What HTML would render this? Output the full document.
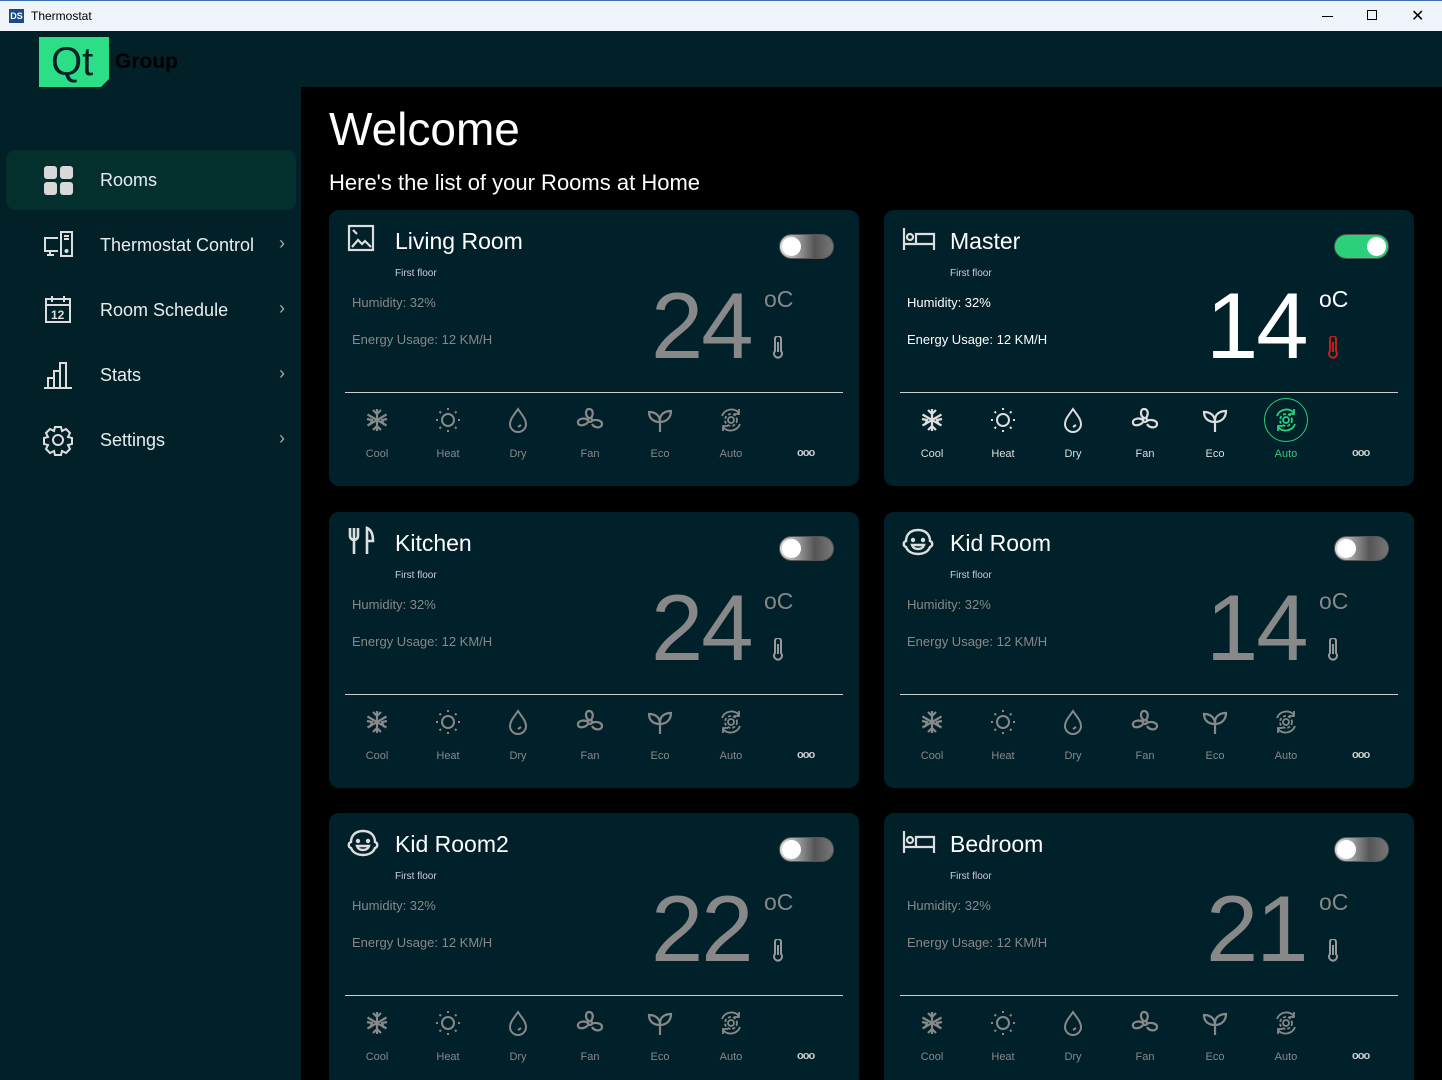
<!DOCTYPE html>
<html style="overflow:hidden"><head><meta charset="utf-8"><style>
*{margin:0;padding:0;box-sizing:border-box}
html,body{width:1442px;height:1080px;overflow:hidden}
body{background:#000;font-family:"Liberation Sans",sans-serif;position:relative}
.tb{position:absolute;left:0;top:0;width:1442px;height:31px;background:#eff3fa;border-top:1px solid #3b6fb5}
.tb .t{position:absolute;left:31px;top:8px;font-size:12px;color:#000}
.ds{position:absolute;left:9px;top:8px;width:15px;height:14px;background:#1b4a86;color:#fff;font-size:9px;font-weight:bold;text-align:center;line-height:14px}
.side{position:absolute;left:0;top:31px;width:301px;height:1049px;background:#012027}
.hdr{position:absolute;left:301px;top:31px;width:1141px;height:56px;background:#012027}
.qt{position:absolute;left:39px;top:37px;width:70px;height:50px;background:#2cde85;clip-path:polygon(5px 0,100% 0,100% 42px,62px 100%,0 100%,0 0);color:#012027;font-size:40px;line-height:50px;padding-left:12px}
.grp{position:absolute;left:115px;top:50px;font-size:21px;font-weight:bold;color:#000}
.nav{position:absolute;left:6px;width:290px;height:60px;border-radius:10px;color:#e8eef0;font-size:18px}
.nav.a{background:#03302c}
.nav span{position:absolute;left:94px;top:20px}
.nav svg{position:absolute;left:36px;top:14px}
.nav .ch{position:absolute;left:273px;top:18px;color:#aaa;font-size:18px}
h1{position:absolute;left:329px;top:102px;font-size:46px;font-weight:normal;color:#fff}
.sub{position:absolute;left:329px;top:170px;font-size:22px;color:#fff}
.card{position:absolute;width:530px;height:276px;background:#00202a;border-radius:10px;overflow:hidden}
.card .ic{position:absolute;left:18px;top:14px}
.card .nm{position:absolute;left:66px;top:18px;font-size:23px;color:#fff}
.card .ff{position:absolute;left:66px;top:58px;font-size:10px;color:#ccd}
.card .hu{position:absolute;left:23px;top:85px;font-size:13px;color:#888}
.card .en{position:absolute;left:23px;top:122px;font-size:13px;color:#888}
.card .tp{position:absolute;left:322px;top:62px;font-size:94px;color:#888;letter-spacing:-2px}
.card .oc{position:absolute;left:435px;top:76px;font-size:23px;color:#888}
.card .th{position:absolute;left:441px;top:126px;color:#999}
.card .ln{position:absolute;left:16px;top:182px;width:498px;height:1px;background:#ccc}
.card .tg{position:absolute;left:450px;top:24px;width:55px;height:25px;border-radius:13px;background:linear-gradient(90deg,#ddd 0,#999 35%,#555 65%,#777);border:1px solid #555}
.card .tg::after{content:"";position:absolute;left:2px;top:2px;width:19px;height:19px;border-radius:50%;background:#fff}
.card.on .tg{background:#2ccf7a}
.card.on .tg::after{left:32px}
.card.on .hu,.card.on .en,.card.on .tp,.card.on .oc{color:#fff}
.md{position:absolute;top:196px;width:60px;text-align:center;font-size:11px;color:#888}
.md svg{display:block;margin:0 auto 14px}
.dots{position:absolute;left:468px;top:237px;font-size:11px;color:#ccc;letter-spacing:-1px;font-weight:bold}
.on .md{color:#ddd}
.on .md.au{color:#2ccf7a}
.ring{position:absolute;left:8px;top:-8px;width:44px;height:44px;border:1.5px solid #2ccf7a;border-radius:50%}
</style></head><body>
<svg width="0" height="0" style="position:absolute">
<defs>
<g id="cool" fill="none" stroke="currentColor" stroke-width="2.2"><path d="M14 3v22M4.5 8.5l19 11M4.5 19.5l19-11M10 4l4 4 4-4M10 24l4-4 4 4M4 13l5 1-2 5M24 13l-5 1 2 5"/></g>
<g id="heat" fill="none" stroke="currentColor" stroke-width="2"><circle cx="14" cy="14" r="6"/><path d="M14 2v2M14 24v2M2 14h2M24 14h2M5.5 5.5l1.5 1.5M21 21l1.5 1.5M5.5 22.5L7 21M21 7l1.5-1.5"/></g>
<g id="dry" fill="none" stroke="currentColor" stroke-width="2"><path d="M14 3C10 9 6 13 6 18a8 8 0 0016 0c0-5-4-9-8-15z"/><path d="M17 19l-3 2"/></g>
<g id="fan" fill="none" stroke="currentColor" stroke-width="2.2"><circle cx="14" cy="14" r="2"/><path d="M13 12C9 10 9 3 13 3s5 5 2 9M16 15c3-2 10-1 10 3s-7 5-10 0M12 16c-2 3-9 5-10 1s6-6 10-3"/></g>
<g id="eco" fill="none" stroke="currentColor" stroke-width="2.2"><path d="M14 26V14M14 16C8 16 3 13 3 6c6 0 11 3 11 10M14 14c0-6 5-9 11-9 0 7-5 11-11 11"/></g>
<g id="auto" fill="none" stroke="currentColor" stroke-width="1.8"><circle cx="14" cy="14" r="3"/><circle cx="14" cy="14" r="6" stroke-dasharray="3 2"/><path d="M5 10A10 10 0 0122 7M23 18A10 10 0 016 21M22 3v5h-5M6 25v-5h5"/></g>
<g id="thm" fill="none" stroke="currentColor" stroke-width="2"><path d="M5 3a3 3 0 016 0v12a4 4 0 11-6 0z"/><path d="M8 6v10"/></g>
<g id="modes">
</g>
</defs></svg>

<div class="tb"><div class="ds">DS</div><div class="t">Thermostat</div>
<div style="position:absolute;left:1322px;top:15px;width:11px;height:1px;background:#000"></div>
<div style="position:absolute;left:1367px;top:9px;width:10px;height:10px;border:1px solid #000"></div>
<div style="position:absolute;left:1411px;top:5px;font-size:16px;color:#000">✕</div></div>
<div class="side"></div><div class="hdr"></div>
<div class="qt">Qt</div><div class="grp">Group</div>

<div class="nav a" style="top:150px"><svg width="32" height="32"><g fill="#d8d8d8"><rect x="2" y="2" width="13" height="13" rx="3"/><rect x="18" y="2" width="13" height="13" rx="3"/><rect x="2" y="18" width="13" height="13" rx="3"/><rect x="18" y="18" width="13" height="13" rx="3"/></g></svg><span>Rooms</span></div>
<div class="nav" style="top:215px"><svg width="32" height="32" fill="none" stroke="#ddd" stroke-width="2"><path d="M16 9H3v13h13M8 22v4M5 26h7"/><rect x="19" y="3" width="11" height="24"/><path d="M22 7h5M22 10h5"/><circle cx="24.5" cy="22" r="1" fill="#ddd"/></svg><span>Thermostat Control</span><div class="ch">›</div></div>
<div class="nav" style="top:280px"><svg width="32" height="32" fill="none" stroke="#ddd" stroke-width="2"><rect x="4" y="5" width="24" height="23"/><path d="M4 11h24M10 2v6M22 2v6"/><text x="9" y="25" font-size="12" fill="#ddd" stroke="none" font-family="Liberation Sans" font-weight="bold">12</text></svg><span>Room Schedule</span><div class="ch">›</div></div>
<div class="nav" style="top:345px"><svg width="32" height="32" fill="none" stroke="#ddd" stroke-width="2"><path d="M2 29h28M6 29V19h6v10M12 29V12h6v17M18 29V4h6v25"/></svg><span>Stats</span><div class="ch">›</div></div>
<div class="nav" style="top:410px"><svg width="32" height="32" fill="none" stroke="#ddd" stroke-width="2"><circle cx="16" cy="16" r="5"/><path d="M13 3h6l1 4 4-2 4 4-2 4 4 1v6l-4 1 2 4-4 4-4-2-1 4h-6l-1-4-4 2-4-4 2-4-4-1v-6l4-1-2-4 4-4 4 2z"/></svg><span>Settings</span><div class="ch">›</div></div>

<h1>Welcome</h1>
<div class="sub">Here's the list of your Rooms at Home</div>

<div class="card" style="left:329px;top:210px">
<svg class="ic" width="30" height="30" fill="none" stroke="#ddd" stroke-width="2.2"><rect x="2" y="2" width="24" height="24"/><path d="M5 23l6-7 4 4 3-3 6 6M6 6l4 4"/></svg>
<div class="nm">Living Room</div><div class="tg"></div><div class="ff">First floor</div>
<div class="hu">Humidity: 32%</div><div class="en">Energy Usage: 12 KM/H</div>
<div class="tp">24</div><div class="oc">oC</div><svg class="th" width="16" height="24"><use href="#thm"/></svg><div class="ln"></div>
<div class="md" style="left:18px"><svg width="28" height="28"><use href="#cool"/></svg>Cool</div>
<div class="md" style="left:89px"><svg width="28" height="28"><use href="#heat"/></svg>Heat</div>
<div class="md" style="left:159px"><svg width="28" height="28"><use href="#dry"/></svg>Dry</div>
<div class="md" style="left:231px"><svg width="28" height="28"><use href="#fan"/></svg>Fan</div>
<div class="md" style="left:301px"><svg width="28" height="28"><use href="#eco"/></svg>Eco</div>
<div class="md" style="left:372px"><svg width="28" height="28"><use href="#auto"/></svg>Auto</div>
<div class="dots">ooo</div></div>

<div class="card on" style="left:884px;top:210px">
<svg class="ic" width="34" height="30" fill="none" stroke="#ddd" stroke-width="2.2"><path d="M2 4v22M2 20h30v6M32 20V10H14v10"/><circle cx="8" cy="13" r="3"/></svg>
<div class="nm">Master</div><div class="tg"></div><div class="ff">First floor</div>
<div class="hu">Humidity: 32%</div><div class="en">Energy Usage: 12 KM/H</div>
<div class="tp">14</div><div class="oc">oC</div><svg class="th" width="16" height="24" style="color:#c0201c"><use href="#thm"/></svg><div class="ln"></div>
<div class="md" style="left:18px"><svg width="28" height="28"><use href="#cool"/></svg>Cool</div>
<div class="md" style="left:89px"><svg width="28" height="28"><use href="#heat"/></svg>Heat</div>
<div class="md" style="left:159px"><svg width="28" height="28"><use href="#dry"/></svg>Dry</div>
<div class="md" style="left:231px"><svg width="28" height="28"><use href="#fan"/></svg>Fan</div>
<div class="md" style="left:301px"><svg width="28" height="28"><use href="#eco"/></svg>Eco</div>
<div class="md au" style="left:372px"><div class="ring"></div><svg width="28" height="28"><use href="#auto"/></svg>Auto</div>
<div class="dots">ooo</div></div>

<div class="card" style="left:329px;top:512px">
<svg class="ic" width="30" height="30" fill="none" stroke="#ddd" stroke-width="2.6"><path d="M3 2v8a4 4 0 008 0V2M7 2v26M20 28V2c5 2 6 8 6 13h-6"/></svg>
<div class="nm">Kitchen</div><div class="tg"></div><div class="ff">First floor</div>
<div class="hu">Humidity: 32%</div><div class="en">Energy Usage: 12 KM/H</div>
<div class="tp">24</div><div class="oc">oC</div><svg class="th" width="16" height="24"><use href="#thm"/></svg><div class="ln"></div>
<div class="md" style="left:18px"><svg width="28" height="28"><use href="#cool"/></svg>Cool</div>
<div class="md" style="left:89px"><svg width="28" height="28"><use href="#heat"/></svg>Heat</div>
<div class="md" style="left:159px"><svg width="28" height="28"><use href="#dry"/></svg>Dry</div>
<div class="md" style="left:231px"><svg width="28" height="28"><use href="#fan"/></svg>Fan</div>
<div class="md" style="left:301px"><svg width="28" height="28"><use href="#eco"/></svg>Eco</div>
<div class="md" style="left:372px"><svg width="28" height="28"><use href="#auto"/></svg>Auto</div>
<div class="dots">ooo</div></div>

<div class="card" style="left:884px;top:512px">
<svg class="ic" width="32" height="30" fill="none" stroke="#ddd" stroke-width="2.4"><path d="M16 4C8 4 4 9 4 15c-3 1-3 5 0 6 2 5 7 7 12 7s10-2 12-7c3-1 3-5 0-6 0-6-4-11-12-11z"/><circle cx="11" cy="14" r="1" fill="#ddd"/><circle cx="21" cy="14" r="1" fill="#ddd"/><path d="M10 19h12c-1 3-3 4-6 4s-5-1-6-4z"/></svg>
<div class="nm">Kid Room</div><div class="tg"></div><div class="ff">First floor</div>
<div class="hu">Humidity: 32%</div><div class="en">Energy Usage: 12 KM/H</div>
<div class="tp">14</div><div class="oc">oC</div><svg class="th" width="16" height="24"><use href="#thm"/></svg><div class="ln"></div>
<div class="md" style="left:18px"><svg width="28" height="28"><use href="#cool"/></svg>Cool</div>
<div class="md" style="left:89px"><svg width="28" height="28"><use href="#heat"/></svg>Heat</div>
<div class="md" style="left:159px"><svg width="28" height="28"><use href="#dry"/></svg>Dry</div>
<div class="md" style="left:231px"><svg width="28" height="28"><use href="#fan"/></svg>Fan</div>
<div class="md" style="left:301px"><svg width="28" height="28"><use href="#eco"/></svg>Eco</div>
<div class="md" style="left:372px"><svg width="28" height="28"><use href="#auto"/></svg>Auto</div>
<div class="dots">ooo</div></div>

<div class="card" style="left:329px;top:813px">
<svg class="ic" width="32" height="30" fill="none" stroke="#ddd" stroke-width="2.4"><path d="M16 4C8 4 4 9 4 15c-3 1-3 5 0 6 2 5 7 7 12 7s10-2 12-7c3-1 3-5 0-6 0-6-4-11-12-11z"/><circle cx="11" cy="14" r="1" fill="#ddd"/><circle cx="21" cy="14" r="1" fill="#ddd"/><path d="M10 19h12c-1 3-3 4-6 4s-5-1-6-4z"/></svg>
<div class="nm">Kid Room2</div><div class="tg"></div><div class="ff">First floor</div>
<div class="hu">Humidity: 32%</div><div class="en">Energy Usage: 12 KM/H</div>
<div class="tp">22</div><div class="oc">oC</div><svg class="th" width="16" height="24"><use href="#thm"/></svg><div class="ln"></div>
<div class="md" style="left:18px"><svg width="28" height="28"><use href="#cool"/></svg>Cool</div>
<div class="md" style="left:89px"><svg width="28" height="28"><use href="#heat"/></svg>Heat</div>
<div class="md" style="left:159px"><svg width="28" height="28"><use href="#dry"/></svg>Dry</div>
<div class="md" style="left:231px"><svg width="28" height="28"><use href="#fan"/></svg>Fan</div>
<div class="md" style="left:301px"><svg width="28" height="28"><use href="#eco"/></svg>Eco</div>
<div class="md" style="left:372px"><svg width="28" height="28"><use href="#auto"/></svg>Auto</div>
<div class="dots">ooo</div></div>

<div class="card" style="left:884px;top:813px">
<svg class="ic" width="34" height="30" fill="none" stroke="#ddd" stroke-width="2.2"><path d="M2 4v22M2 20h30v6M32 20V10H14v10"/><circle cx="8" cy="13" r="3"/></svg>
<div class="nm">Bedroom</div><div class="tg"></div><div class="ff">First floor</div>
<div class="hu">Humidity: 32%</div><div class="en">Energy Usage: 12 KM/H</div>
<div class="tp">21</div><div class="oc">oC</div><svg class="th" width="16" height="24"><use href="#thm"/></svg><div class="ln"></div>
<div class="md" style="left:18px"><svg width="28" height="28"><use href="#cool"/></svg>Cool</div>
<div class="md" style="left:89px"><svg width="28" height="28"><use href="#heat"/></svg>Heat</div>
<div class="md" style="left:159px"><svg width="28" height="28"><use href="#dry"/></svg>Dry</div>
<div class="md" style="left:231px"><svg width="28" height="28"><use href="#fan"/></svg>Fan</div>
<div class="md" style="left:301px"><svg width="28" height="28"><use href="#eco"/></svg>Eco</div>
<div class="md" style="left:372px"><svg width="28" height="28"><use href="#auto"/></svg>Auto</div>
<div class="dots">ooo</div></div>
</body></html>
